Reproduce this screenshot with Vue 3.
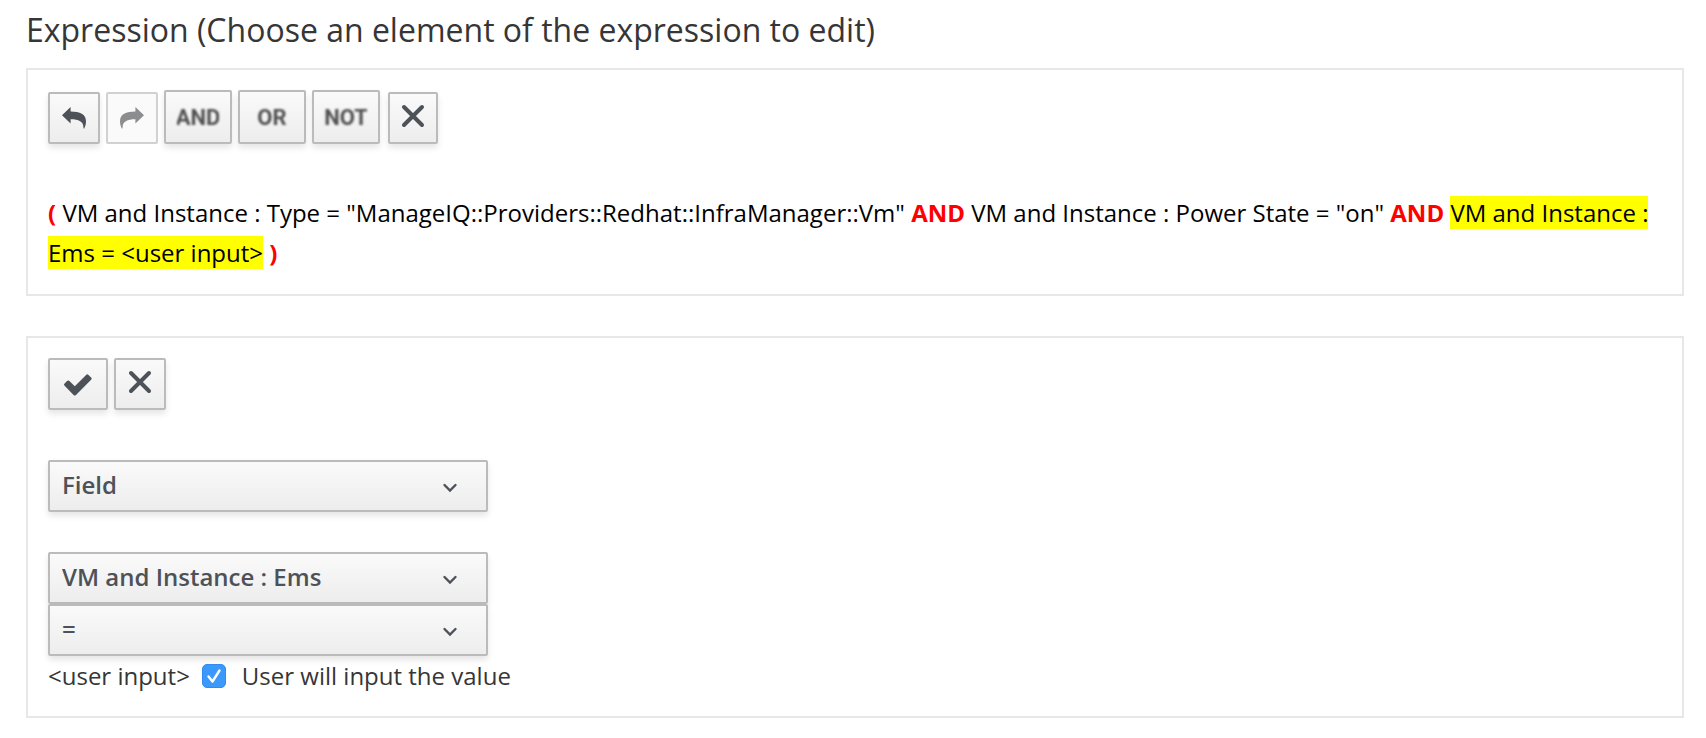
<script setup>
import { ref } from 'vue'

const source = ref('Field')
const field = ref('VM and Instance : Ems')
const operator = ref('=')
const userInput = ref(true)
</script>

<template>
  <main class="editor">
    <h1 class="title">Expression (Choose an element of the expression to edit)</h1>

    <section class="panel">
      <div class="toolbar">
        <button class="btn square" type="button" aria-label="Undo">
          <svg class="icon" width="24" height="22" viewBox="0 0 24 22" aria-hidden="true">
            <path d="M0 8.2 8.6 0v4.6C18 4.6 24 7.5 24 14.2c0 2.8-.7 5.3-1.9 7.6-.5-.2-.7-.9-.7-1.8 0-5.2-4.5-7.7-12.8-7.7v4.2z" />
          </svg>
        </button>
        <button class="btn square" type="button" aria-label="Redo" disabled>
          <svg class="icon" width="24" height="22" viewBox="0 0 24 22" aria-hidden="true">
            <path d="M24 8.2 15.4 0v4.6C6 4.6 0 7.5 0 14.2c0 2.8.7 5.3 1.9 7.6.5-.2.7-.9.7-1.8 0-5.2 4.5-7.7 12.8-7.7v4.2z" />
          </svg>
        </button>
        <button class="btn logic" type="button"><span class="word">AND</span></button>
        <button class="btn logic" type="button"><span class="word">OR</span></button>
        <button class="btn logic" type="button"><span class="word">NOT</span></button>
        <button class="btn remove" type="button" aria-label="Remove element">
          <svg class="icon cross" width="24" height="24" viewBox="0 0 24 24" aria-hidden="true">
            <path d="M3 3l18 18M21 3L3 21" />
          </svg>
        </button>
      </div>
      <p class="expression">
        <b>(</b> VM and Instance : Type = "ManageIQ::Providers::Redhat::InfraManager::Vm" <b>AND</b>
        VM and Instance : Power State = "on" <b>AND</b> <mark>VM and Instance : Ems = &lt;user input&gt;</mark> <b>)</b>
      </p>
    </section>

    <section class="panel">
      <div class="toolbar">
        <button class="btn commit" type="button" aria-label="Commit">
          <svg class="icon tickmark" width="28" height="22" viewBox="0 0 28 22" aria-hidden="true">
            <path d="M.6 9.4 3 7q1.200-1.200 2.400 0l5.400 5.200L22.100.9q1.200-1.200 2.400 0l2.600 2.500q1.200 1.200 0 2.400L12 20.900q-1.200 1.200-2.400 0L.6 11.800q-1.200-1.200 0-2.400z" />
          </svg>
        </button>
        <button class="btn square" type="button" aria-label="Discard">
          <svg class="icon cross" width="24" height="24" viewBox="0 0 24 24" aria-hidden="true">
            <path d="M3 3l18 18M21 3L3 21" />
          </svg>
        </button>
      </div>

      <div class="picker source">
        <select v-model="source" class="btn" aria-label="Expression type">
          <option>Field</option>
        </select>
        <svg class="chevron" width="16" height="12" viewBox="0 0 16 12" aria-hidden="true"><path d="M2.500 3l5.500 5.500L13.500 3" /></svg>
      </div>
      <div class="picker">
        <select v-model="field" class="btn" aria-label="Field">
          <option>VM and Instance : Ems</option>
        </select>
        <svg class="chevron" width="16" height="12" viewBox="0 0 16 12" aria-hidden="true"><path d="M2.500 3l5.500 5.500L13.500 3" /></svg>
      </div>
      <div class="picker">
        <select v-model="operator" class="btn" aria-label="Operator">
          <option>=</option>
        </select>
        <svg class="chevron" width="16" height="12" viewBox="0 0 16 12" aria-hidden="true"><path d="M2.500 3l5.500 5.500L13.500 3" /></svg>
      </div>

      <div class="value">
        <span>&lt;user input&gt;</span>
        <span class="check">
          <input id="user-value" v-model="userInput" type="checkbox" />
          <svg v-if="userInput" class="tick" width="24" height="24" viewBox="0 0 24 24" aria-hidden="true"><path d="M6.500 12.500l4 5L17.500 6.500" /></svg>
        </span>
        <label for="user-value">User will input the value</label>
      </div>
    </section>
  </main>
</template>

<style>
body {
  margin: 0;
  background: #fff;
}
</style>

<style scoped>
.editor {
  padding: 8px 22px 20px 26px;
  color: #363636;
  font-family: "Open Sans", "Noto Sans", sans-serif;
  font-size: 24px;
  line-height: 40px;
}

.title {
  margin: 0 0 16px;
  font-size: 32px;
  font-weight: 400;
  line-height: 44px;
}

.panel {
  padding: 20px;
  border: 2px solid #e7e7e7;
}

.panel + .panel {
  margin-top: 40px;
}

.toolbar {
  display: flex;
  align-items: flex-end;
  gap: 6px;
}

.btn {
  display: flex;
  align-items: center;
  justify-content: center;
  box-sizing: border-box;
  height: 52px;
  margin: 0;
  padding: 0;
  border: 2px solid #bbb;
  border-radius: 2px;
  background: linear-gradient(#fafafa, #ededed);
  box-shadow: 0 4px 6px rgba(3, 3, 3, 0.1);
  color: #4d5258;
  font: inherit;
}

.btn:disabled {
  border-color: #d1d1d1;
  background: #fafafa;
  box-shadow: none;
  color: #8b8d8f;
}

.square {
  width: 52px;
}

.commit {
  width: 60px;
}

.remove {
  width: 50px;
  margin-left: 2px;
}

.logic {
  width: 68px;
  height: 54px;
  padding-top: 2px;
  color: #505050;
}

.word {
  display: flex;
  justify-content: center;
  width: 42px;
  overflow: hidden;
  font-family: Roboto, "Liberation Sans", sans-serif;
  font-size: 22px;
  font-weight: 700;
  line-height: 28px;
  filter: blur(1px);
}

.icon {
  display: block;
  fill: currentColor;
}

.cross {
  margin-bottom: 4px;
  fill: none;
  stroke: currentColor;
  stroke-width: 4;
  stroke-linecap: round;
}

.tickmark {
  margin-top: 2px;
}

.expression {
  margin: 49px 0 1px;
  color: #000;
}

.expression b {
  color: #f00;
}

mark {
  background: #ff0;
  color: inherit;
}

.picker {
  position: relative;
  width: 440px;
  max-width: 100%;
}

.source {
  margin: 50px 0 40px;
}

.picker select {
  display: block;
  width: 100%;
  padding: 0 60px 2px 12px;
  appearance: none;
  font-weight: 600;
}

.chevron {
  position: absolute;
  top: 22px;
  right: 30px;
  fill: none;
  stroke: #4d5258;
  stroke-width: 2.4;
  stroke-linecap: round;
  pointer-events: none;
}

.value {
  display: flex;
  align-items: center;
}

.check {
  position: relative;
  width: 24px;
  height: 24px;
  margin: 0 16px 0 12px;
}

.check input {
  display: block;
  width: 24px;
  height: 24px;
  margin: 0;
  appearance: none;
  border: 1px solid #aaa;
  border-radius: 5px;
  background: #fff;
}

.check input:checked {
  border-color: #338af0;
  background: #3b99fc;
}

.tick {
  position: absolute;
  top: 0;
  left: 0;
  fill: none;
  stroke: #fff;
  stroke-width: 2.4;
  stroke-linecap: round;
  stroke-linejoin: round;
  pointer-events: none;
}
</style>
